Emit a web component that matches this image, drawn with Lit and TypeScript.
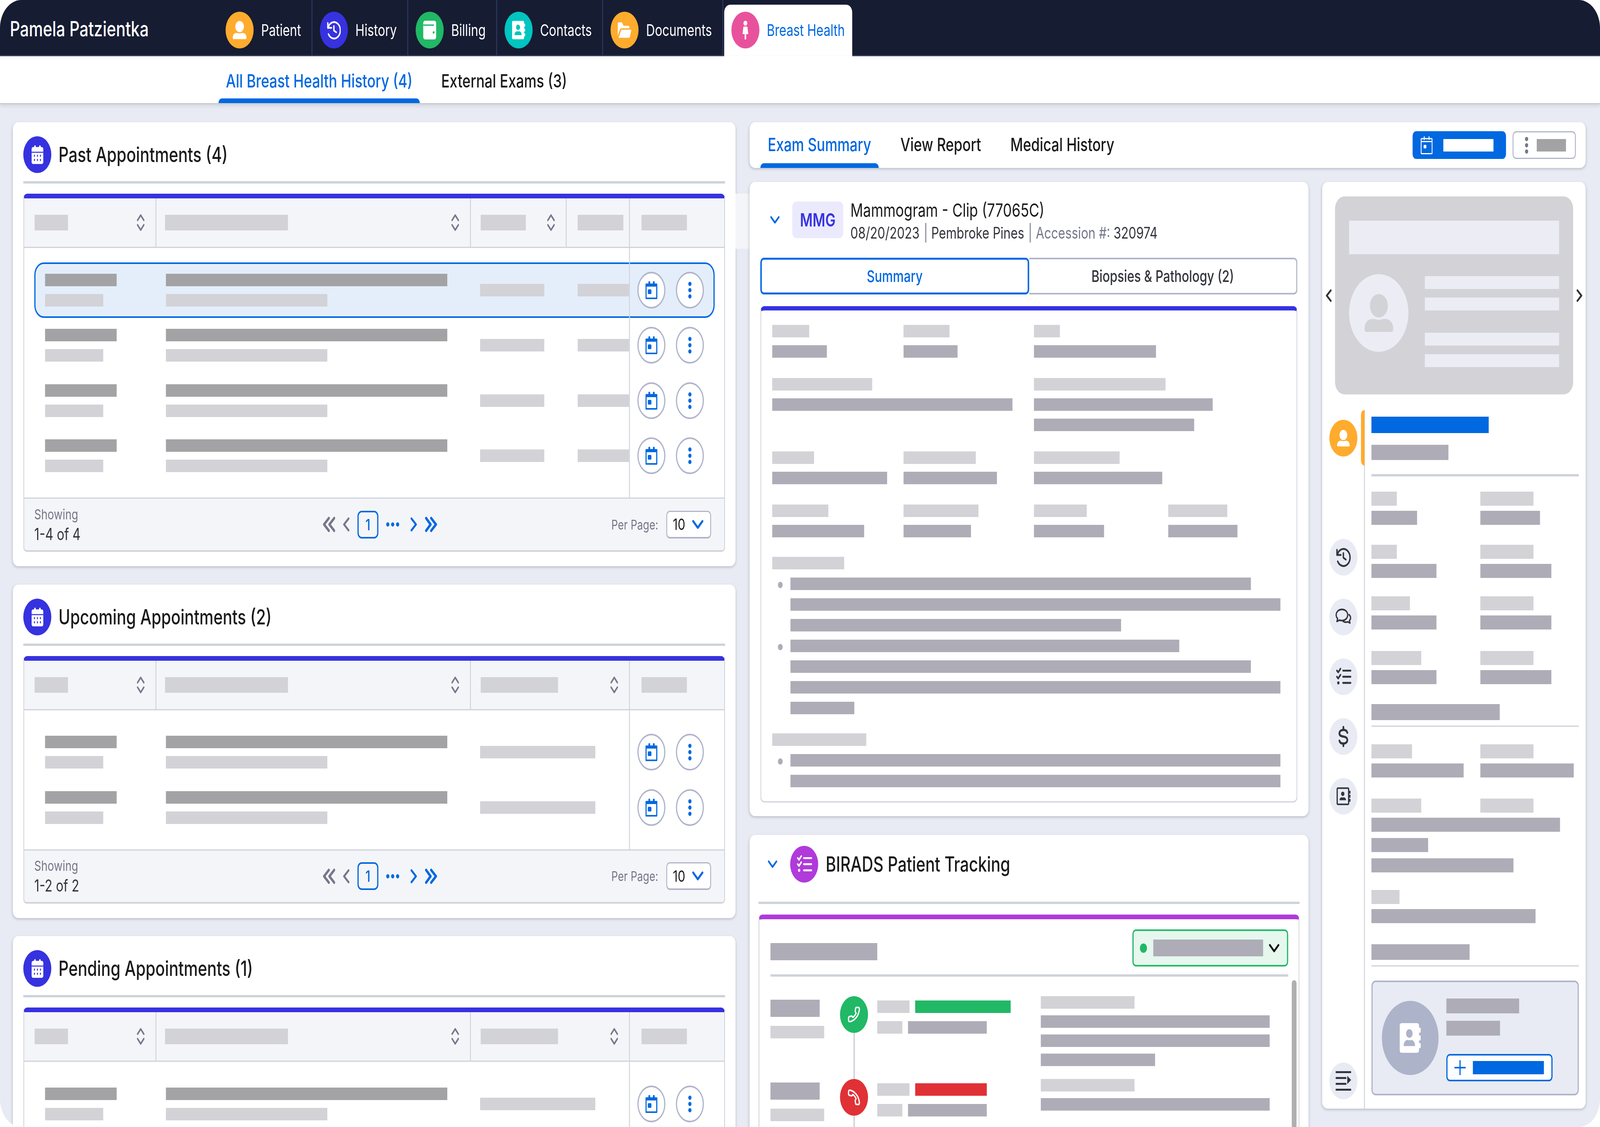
import { LitElement, html, css } from 'lit';
import { customElement } from 'lit/decorators.js';

const bar = (w: number, kind = 'light') => html`<i class="bar ${kind}" style="width:${w}px"></i>`;

const person = html`<svg viewBox="0 0 96 97" fill="currentColor"><circle cx="48" cy="30" r="30"/><path d="M0 91v-4a24 24 0 0 1 24-23h6c6 0 12 2 18 2s12-2 18-2h6a24 24 0 0 1 24 23v4a6 6 0 0 1-6 6H6a6 6 0 0 1-6-6z"/></svg>`;
const history = html`<svg viewBox="2 1.500 20 21" fill="none" stroke="currentColor" stroke-width="2" stroke-linecap="round" stroke-linejoin="round"><path d="M3 4v5.5h5.5"/><path d="M3.4 9.5A9.2 9.2 0 1 1 4 16.5"/><path d="M12 7.500v5l3.500 2"/></svg>`;
const wallet = html`<svg viewBox="2.500 2 19 20"><rect x="3" y="2" width="18" height="20" rx="2.5" fill="#fff"/><rect x="3" y="6" width="15" height="1.4" fill="#21b866"/><circle cx="17.5" cy="14.5" r="1.3" fill="#21b866"/></svg>`;
const contactsSolid = (c: string) => html`<svg viewBox="2.500 2 19.500 20"><rect x="3" y="2" width="17" height="20" rx="1.5" fill="#fff"/><rect x="19" y="5" width="2.5" height="3.5" rx=".8" fill="#fff"/><rect x="19" y="10.2" width="2.5" height="3.5" rx=".8" fill="#fff"/><rect x="19" y="15.4" width="2.5" height="3.5" rx=".8" fill="#fff"/><circle cx="11.5" cy="9" r="2.9" fill="${c}"/><path d="M6.5 17.5v-.8a3.6 3.6 0 0 1 3.4-3.4c1 .3 2.2.3 3.2 0a3.6 3.6 0 0 1 3.4 3.4v.8z" fill="${c}"/></svg>`;
const folder = html`<svg viewBox="2 3 21 18" fill="#fff"><path d="M2 5a2 2 0 0 1 2-2h4.5l2.5 4h7a2 2 0 0 1 2 2v1H8a3 3 0 0 0-3 2.3L2 19z"/><path d="M7.6 11.5H23l-2.4 8.6a1.6 1.6 0 0 1-1.5.9H3.4z"/></svg>`;
const woman = html`<svg viewBox="6 1 12 22.500" fill="#fff"><circle cx="12" cy="4" r="3"/><path d="M9.8 8h4.4c.6 0 1 .4 1.1 1l1.2 8H13.2v6.5h-2.4V17H7.5l1.2-8c.1-.6.5-1 1.100-1z"/></svg>`;
const calSolid = html`<svg viewBox="3 .500 18 23"><rect x="7" y="1" width="2.4" height="5" rx="1.2" fill="#fff"/><rect x="14.6" y="1" width="2.4" height="5" rx="1.2" fill="#fff"/><rect x="3" y="3" width="18" height="20" rx="2.4" fill="#fff"/><rect x="3" y="8.6" width="18" height="1.2" fill="#3632e0"/><g fill="#3632e0"><rect x="6.6" y="12" width="1.6" height="2.6" rx=".8"/><rect x="11.2" y="12" width="1.6" height="2.6" rx=".8"/><rect x="15.8" y="12" width="1.6" height="2.6" rx=".8"/><rect x="6.6" y="17" width="1.6" height="2.6" rx=".8"/><rect x="11.2" y="17" width="1.6" height="2.6" rx=".8"/><rect x="15.8" y="17" width="1.6" height="2.6" rx=".8"/></g></svg>`;
const calOutline = html`<svg viewBox="0 0 40 46" fill="currentColor"><rect x="10" y="0" width="6" height="10" rx="3"/><rect x="25" y="0" width="6" height="10" rx="3"/><path fill-rule="evenodd" d="M2 6h36a2 2 0 0 1 2 2v36a2 2 0 0 1-2 2H2a2 2 0 0 1-2-2V8a2 2 0 0 1 2-2zM4 14v28h32V14z"/><rect x="8" y="21" width="12" height="12" rx="2.5"/></svg>`;
const calThin = html`<svg viewBox="0 0 40 46" fill="none" stroke="currentColor" stroke-width="3"><path d="M12 1v7M28 1v7" stroke-linecap="round"/><rect x="1.5" y="6" width="37" height="38.5" rx="2"/><path d="M3 13.5h34"/><rect x="10" y="22" width="9" height="9" rx="1.5" fill="currentColor" stroke="none"/></svg>`;
const kebab = html`<svg viewBox="0 0 12 44" fill="currentColor"><circle cx="6" cy="6" r="5.4"/><circle cx="6" cy="22" r="5.4"/><circle cx="6" cy="38" r="5.4"/></svg>`;
const sort = html`<svg viewBox="0 0 29 46" fill="none" stroke="currentColor" stroke-width="4.500" stroke-linecap="round" stroke-linejoin="round"><path d="M4 17 14.500 4 25 17M4 29l10.500 13L25 29"/></svg>`;
const dblLeft = html`<svg viewBox="0 0 41 40" fill="none" stroke="currentColor" stroke-width="7" stroke-linecap="round" stroke-linejoin="round"><path d="M20 4 4 20l16 16M38 4 22 20l16 16"/></svg>`;
const dblRight = html`<svg viewBox="0 0 41 40" fill="none" stroke="currentColor" stroke-width="7" stroke-linecap="round" stroke-linejoin="round"><path d="M4 4l15 16L4 36M21 4l16 16-16 16"/></svg>`;
const left = html`<svg viewBox="0 0 23 38" fill="none" stroke="currentColor" stroke-width="6" stroke-linecap="round" stroke-linejoin="round"><path d="M19 4 4 19l15 15"/></svg>`;
const right = html`<svg viewBox="0 0 23 38" fill="none" stroke="currentColor" stroke-width="6" stroke-linecap="round" stroke-linejoin="round"><path d="M4 4l15 15L4 34"/></svg>`;
const dots = html`<svg viewBox="0 0 44 12" fill="currentColor"><circle cx="5.500" cy="6" r="5.400"/><circle cx="22" cy="6" r="5.400"/><circle cx="38.500" cy="6" r="5.400"/></svg>`;
const chevDown = html`<svg viewBox="0 0 34 20" fill="none" stroke="currentColor" stroke-width="5" stroke-linecap="round" stroke-linejoin="round"><path d="M4 3l13 14L30 3"/></svg>`;
const checklist = html`<svg viewBox="0 0 24 24" fill="none" stroke="currentColor" stroke-width="2" stroke-linecap="round" stroke-linejoin="round"><path d="M3 5.500l1.800 1.800L8 3.500M11.500 5.500H22M3 12l1.800 1.800L8 10M11.500 12H22M11.500 18.500H22"/><circle cx="5" cy="18.500" r="1.600" fill="currentColor" stroke="none"/></svg>`;
const chat = html`<svg viewBox="0 0 24 24" fill="none" stroke="currentColor" stroke-width="1.700" stroke-linecap="round" stroke-linejoin="round"><path d="M10 4C5.600 4 2 6.500 2 9.800c0 1.500.8 2.900 2.100 3.900L3 16.700l3.700-1.400c1 .3 2.100.5 3.300.5 4.400 0 8-2.600 8-6S14.400 4 10 4z"/><path d="M19.800 9.500c1.300.8 2.200 2 2.200 3.400 0 1.200-.6 2.200-1.700 3l.9 2.500-3-1.200c-.8.200-1.600.3-2.500.3-2 0-3.700-.6-4.800-1.600"/></svg>`;
const dollar = html`<svg viewBox="0 0 24 24" fill="none" stroke="currentColor" stroke-width="2.400" stroke-linecap="round" stroke-linejoin="round"><path d="M17.500 8c-.6-2-2.800-3-5.500-3-3.200 0-5.500 1.500-5.500 3.700 0 2.400 2.400 3 5.500 3.400s5.500 1.200 5.500 3.500-2.300 3.900-5.500 3.900c-2.700 0-4.900-1-5.500-3"/><path d="M12 2v3M12 19.500V22"/></svg>`;
const contactsLine = html`<svg viewBox="-2 -2 28 28" fill="none" stroke="currentColor" stroke-width="2"><rect x="2" y="2" width="18.500" height="20" rx="1.200"/><path d="M22.500 6v2M22.500 11v2M22.500 16v2" stroke-linecap="round"/><circle cx="11" cy="9" r="2.700" fill="currentColor" stroke="none"/><path d="M5.800 17v-.6a3.400 3.400 0 0 1 3.400-3.100c1.200.3 2.400.3 3.600 0a3.400 3.400 0 0 1 3.400 3.100v.6z" fill="currentColor" stroke="none"/></svg>`;
const collapse = html`<svg viewBox="0 0 52 50" fill="currentColor"><rect width="52" height="5" rx="1"/><rect y="15" width="36" height="5" rx="1"/><rect y="30" width="36" height="5" rx="1"/><rect y="45" width="52" height="5" rx="1"/><path d="M39 12l13 10.500L39 33z"/></svg>`;
const phonePath = 'M22 16.920v3a2 2 0 0 1-2.180 2 19.790 19.790 0 0 1-8.630-3.070 19.500 19.500 0 0 1-6-6 19.790 19.790 0 0 1-3.070-8.670A2 2 0 0 1 4.110 2h3a2 2 0 0 1 2 1.720c.127.960.361 1.903.7 2.810a2 2 0 0 1-.45 2.110L8.090 9.910a16 16 0 0 0 6 6l1.270-1.270a2 2 0 0 1 2.110-.45c.907.339 1.850.573 2.810.7A2 2 0 0 1 22 16.920z';
const phoneIn = html`<svg viewBox="0 0 24 24" fill="none" stroke="#fff" stroke-width="2.200" stroke-linejoin="round"><path transform="matrix(-1 0 0 1 24 0)" d="${phonePath}"/></svg>`;
const phoneOut = html`<svg viewBox="0 0 24 24" fill="none" stroke="#fff" stroke-width="2.200" stroke-linejoin="round"><path transform="rotate(180 12 12)" d="${phonePath}"/></svg>`;
const plus = html`<svg viewBox="0 0 38 38" fill="none" stroke="currentColor" stroke-width="4"><path d="M0 19h38M19 0v38"/></svg>`;

const navTabs = [
  { label: 'Patient', color: '#ffab2e', icon: person },
  { label: 'History', color: '#3632e0', icon: history },
  { label: 'Billing', color: '#21b866', icon: wallet },
  { label: 'Contacts', color: '#00c5c0', icon: contactsSolid('#00c5c0') },
  { label: 'Documents', color: '#ffab2e', icon: folder },
  { label: 'Breast Health', color: '#e8529c', icon: woman, active: true },
];

const examRows = [
  [{ l: 124, d: [183] }, { l: 154, d: [181] }, { l: 87, d: [409] }],
  [{ l: 335, d: [805] }, null, { l: 441, d: [599, 537] }],
  [{ l: 140, d: [385] }, { l: 242, d: [313] }, { l: 287, d: [430] }],
  [{ l: 188, d: [308] }, { l: 251, d: [226] }, { l: 177, d: [235] }, { l: 198, d: [232] }],
];

const examNotes = [
  { label: 241, items: [[1543, 1642, 1108], [1303, 1543, 1642, 214]] },
  { label: 315, items: [[1642, 1642]] },
];

// side panel rows: top margin, then two label/value stacks
const sideTop = [
  { mt: 39, a: [85, [153]], b: [178, [200]] },
  { mt: 51, a: [85, [218]], b: [178, [238]] },
  { mt: 47, a: [129, [218]], b: [178, [238]] },
  { mt: 55, a: [167, [218]], b: [178, [238]] },
];
const sideBottom = [
  { mt: 45, a: [136, [309]], b: [178, [313]] },
  { mt: 54, a: [167, [632, 190, 476]], b: [178, []] },
  { mt: 45, a: [94, [550]], b: null },
];

const tracking = [
  { color: '#21b866', tint: 'ok', icon: phoneIn, status: 320, lines: [767, 767, 383] },
  { color: '#e03137', tint: 'bad', icon: phoneOut, status: 240, lines: [767] },
];

@customElement('app-root')
export class AppRoot extends LitElement {
  static styles = css`
    :host {
      display: block;
      width: 100vw;
      height: 100vh;
      overflow: hidden;
      font-family: Inter, 'Liberation Sans', sans-serif;
      color: #1a1a1a;
    }
    * { box-sizing: border-box; }
    svg { display: block; }
    .frame {
      width: 5362px;
      height: 2886px;
      overflow: hidden;
      border-radius: 72px;
      background: #e8ebf3;
      display: flex;
      flex-direction: column;
      transform-origin: 0 0;
    }
    .bar { display: block; height: 32px; flex: none; }
    .light { background: #d2d2d7; }
    .dark { background: #a3a3a5; }
    .mid { background: #aeadb7; }

    /* top bar */
    .topbar {
      flex: none;
      height: 144px;
      background: #161c32;
      border-bottom: 3px solid #3a4160;
      display: flex;
      align-items: stretch;
      color: #fff;
    }
    .name {
      width: 731px;
      padding: 44px 0 0 33px;
      font-size: 53px;
      line-height: 60px;
      font-weight: 500;
    }
    .nav-tab {
      display: flex;
      align-items: center;
      gap: 25px;
      padding: 13px 35px 0 25px;
      border-right: 3px solid #2f3a63;
      font-size: 41px;
      font-weight: 400;
    }
    .nav-tab.active {
      align-self: flex-end;
      height: 132px;
      margin-bottom: -3px;
      margin-left: 3px;
      padding: 0 25px 2px 24px;
      background: #fff;
      border: none;
      border-radius: 20px 20px 0 0;
      color: #0068e0;
    }
    .dot {
      flex: none;
      width: 94px;
      height: 94px;
      border-radius: 50%;
      display: grid;
      place-items: center;
      color: #fff;
    }
    .dot svg { width: 46px; height: 48px; }

    /* sub tabs */
    .subnav {
      flex: none;
      height: 123px;
      background: #fff;
      border-bottom: 3px solid #c9ccd2;
      box-shadow: 0 4px 10px rgba(60, 70, 100, 0.14);
      padding-left: 732px;
      display: flex;
      gap: 46px;
      position: relative;
    }
    .tab {
      padding: 4px 25px 0;
      font-size: 47px;
      font-weight: 500;
      display: flex;
      align-items: center;
      position: relative;
      white-space: nowrap;
    }
    .tab.on { color: #0068e0; }
    .tab.on::after {
      content: '';
      position: absolute;
      left: 0;
      right: 0;
      bottom: 0;
      height: 12px;
      background: #0068e0;
      border-radius: 12px 12px 0 0;
    }

    .main {
      flex: 1;
      min-height: 0;
      padding: 46px 48px 0 43px;
      display: grid;
      grid-template-columns: 2422px 2802px;
      gap: 47px;
      overflow: hidden;
    }
    .col { display: flex; flex-direction: column; min-width: 0; }
    .left { gap: 46.5px; }

    .card {
      flex: none;
      background: #fff;
      border-radius: 18px;
      box-shadow: 0 3px 7px rgba(60, 70, 100, 0.28);
      position: relative;
    }
    .appts { padding: 0 35px 37px; }
    .card-head {
      height: 157px;
      padding-top: 36px;
      border-bottom: 6px solid #ced3da;
      display: flex;
      align-items: flex-start;
      gap: 24px;
    }
    .card-head .title {
      font-size: 53px;
      line-height: 94px;
      font-weight: 500;
    }
    .indigo { background: #3632e0; }
    .indigo svg { width: 41px; height: 50px; }
    .bridge {
      position: absolute;
      left: 100%;
      top: 183px;
      width: 47px;
      height: 141px;
      background: #f4f5f8;
    }

    /* table */
    .table {
      margin-top: 26px;
      border: 3px solid #d0d3db;
      border-top: 12px solid #3632e0;
      border-bottom: 4px solid #cfd3dc;
      border-radius: 14px 14px 12px 12px;
    }
    .thead {
      height: 127px;
      background: #f4f5f8;
      border-bottom: 3px solid #d0d3db;
      display: grid;
      grid-template-columns: 443px 1054px 321px 212px 1fr;
    }
    .thead.three { grid-template-columns: 443px 1054px 533px 1fr; }
    .th {
      display: flex;
      align-items: center;
      justify-content: space-between;
      padding: 0 35px 0 33px;
      border-right: 3px solid #d0d3db;
      color: #75778a;
    }
    .th:nth-child(1) { padding-left: 35px; }
    .th:nth-child(2) { padding-left: 29px; }
    .thead:not(.three) .th:nth-child(4) { padding-left: 37px; }
    .th:last-child { padding-left: 39px; border-right: none; }
    .th .bar { height: 40px; }
    .th svg { width: 29px; height: 46px; }

    .tbody {
      position: relative;
      padding: 37px 32px 36px 34px;
    }
    .tbody::after {
      content: '';
      position: absolute;
      left: 2027px;
      top: 0;
      bottom: 0;
      width: 3px;
      background: #d0d3db;
    }
    .row {
      height: 141.5px;
      padding-left: 32px;
      border: 4px solid transparent;
      border-radius: 32px;
      display: grid;
      grid-template-columns: 405px 1053px 327px 172px 1fr;
      align-items: center;
    }
    .row.three { grid-template-columns: 405px 1053px 499px 1fr; }
    .row.sel { background: #e4eefb; border-color: #0068e0; }
    .stack { display: flex; flex-direction: column; gap: 20px; }
    .actions { display: flex; gap: 35px; padding-left: 28px; position: relative; z-index: 1; }
    .round {
      width: 94px;
      height: 94px;
      border-radius: 50%;
      border: 4px solid #b0b5ca;
      background: #fff;
      color: #0068e0;
      display: grid;
      place-items: center;
    }
    .round .cal { width: 40px; height: 46px; }
    .round .keb { width: 12px; height: 44px; }
    .round svg { width: 100%; height: 100%; }

    .tfoot {
      height: 135px;
      border-top: 3px solid #cfd3dc;
      background: #f4f5f8;
      border-radius: 0 0 10px 10px;
      padding: 0 44px 0 34px;
      display: grid;
      grid-template-columns: 967px auto 1fr;
      align-items: center;
    }
    .showing { font-size: 36px; line-height: 46px; color: #75778a; }
    .range { font-size: 42px; line-height: 50px; color: #33343c; margin-top: 3px; }
    .pager { display: flex; align-items: center; gap: 26px; color: #0068e0; }
    .pager .off { color: #75778a; }
    .pager .dbl { width: 41px; height: 40px; }
    .pager .sgl { width: 23px; height: 38px; }
    .pager .more { width: 44px; height: 12px; margin-right: 11px; }
    .pager svg { width: 100%; height: 100%; }
    .page {
      width: 70px;
      height: 71px;
      border: 4px solid #0068e0;
      border-radius: 14px;
      display: grid;
      place-items: center;
      font-size: 40px;
      font-weight: 500;
    }
    .perpage {
      justify-self: end;
      display: flex;
      align-items: center;
      gap: 27px;
      font-size: 34.5px;
      color: #75778a;
    }
    .select {
      width: 150px;
      height: 71px;
      border: 3px solid #b0b5ca;
      border-bottom-width: 4px;
      border-radius: 12px;
      background: #fff;
      padding: 0 21px 0 19px;
      display: flex;
      align-items: center;
      justify-content: space-between;
      color: #1a1a1a;
      font-size: 40px;
    }
    .select svg { width: 41px; height: 24px; color: #0068e0; }

    /* right side */
    .tabs-card {
      height: 117px;
      padding: 0 33px 0 36px;
      display: flex;
      align-items: stretch;
      gap: 22px;
    }
    .tabs-card .tab { padding: 0 25px 4px; font-size: 46.5px; }
    .tabs-card .tabs { display: flex; gap: 48px; flex: 1; }
    .tool {
      align-self: center;
      height: 71px;
      border-radius: 12px;
      display: flex;
      align-items: center;
    }
    .tool .bar { height: 32px; }
    .tool.pri {
      width: 313px;
      background: #0068e0;
      padding-left: 27px;
      gap: 36px;
      color: #fff;
    }
    .tool.pri svg { width: 40px; height: 46px; }
    .white { background: #fff; }
    .tool.sec {
      width: 212px;
      border: 3px solid #b0b5ca;
      padding-left: 38px;
      gap: 28px;
      color: #75778a;
    }
    .tool.sec svg { width: 12px; height: 44px; }

    .lower {
      margin-top: 36px;
      display: grid;
      grid-template-columns: 1873px 883px;
      gap: 46px;
      align-items: start;
    }
    .exam { height: 1624px; padding: 50px 37px 36px 36px; }
    .exam-head { height: 94px; display: flex; align-items: flex-start; }
    .exam-head .chev {
      width: 34px;
      height: 20px;
      margin: 37px 41px 0 32px;
      color: #0068e0;
    }
    .badge {
      width: 171px;
      height: 94px;
      border-radius: 14px;
      background: #ebeafd;
      color: #3632e0;
      font-size: 46px;
      font-weight: 600;
      display: grid;
      place-items: center;
      margin-right: 24px;
    }
    .exam-title { font-size: 47px; line-height: 44px; font-weight: 400; white-space: nowrap; }
    .exam-sub {
      margin-top: 11px;
      height: 50px;
      display: flex;
      align-items: center;
      font-size: 40.8px;
      color: #33343c;
      white-space: nowrap;
    }
    .exam-sub span { padding-right: 19px; line-height: 50px; }
    .exam-sub span + span { padding-left: 17px; border-left: 3px solid #75778a; }
    .exam-sub em { font-style: normal; color: #75778a; }
    .seg { margin-top: 50px; height: 94px; display: flex; font-size: 41px; font-weight: 500; }
    .seg div {
      display: grid;
      place-items: center;
    }
    .seg .a {
      width: 901px;
      border: 5px solid #0068e0;
      border-radius: 12px;
      color: #0068e0;
    }
    .seg .b {
      flex: 1;
      border: 4px solid #b0b5ca;
      border-left: none;
      border-radius: 0 12px 12px 0;
      color: #33343c;
    }
    .panel {
      margin-top: 30px;
      height: 1271px;
      border: 3px solid #d0d3db;
      border-top: 11px solid #3632e0;
      border-radius: 14px;
      padding: 37px 37px 0;
    }
    .fields {
      display: grid;
      grid-template-columns: 440px 437px 450px 1fr;
      row-gap: 52px;
      margin-bottom: 50px;
    }
    .field { display: flex; flex-direction: column; gap: 20px; }
    .note { display: flex; flex-direction: column; gap: 21px; margin-top: 49px; }
    .fields + .note { margin-top: 0; }
    .item { display: grid; grid-template-columns: 61px 1fr; }
    .bullet {
      width: 16px;
      height: 16px;
      border-radius: 50%;
      background: #aeadb7;
      margin: 11px 0 0 19px;
    }
    .lines { display: flex; flex-direction: column; gap: 21px; }

    .birads {
      margin-top: 48px;
      height: 900px;
      padding: 28px 30px 0;
    }
    .bi-head {
      height: 149px;
      border-bottom: 6px solid #ced3da;
      display: flex;
      align-items: flex-start;
    }
    .bi-head .chev { width: 34px; height: 20px; margin: 37px 42px 0 30px; color: #0068e0; }
    .bi-head .dot { background: #b03adb; }
    .bi-head .dot svg { width: 58px; height: 58px; }
    .bi-head .title { margin-left: 25px; font-size: 53px; line-height: 94px; font-weight: 500; }
    .bi-panel {
      margin-top: 27px;
      position: relative;
      height: 600px;
      border: 3px solid #d0d3db;
      border-top: 12px solid #b03adb;
      border-radius: 14px 14px 0 0;
      padding: 26px 35px 0 37px;
    }
    .bi-top {
      height: 115px;
      display: flex;
      justify-content: space-between;
      align-items: flex-start;
    }
    .bi-top > .bar { height: 44px; width: 358px; margin-top: 35px; }
    .status {
      width: 522px;
      height: 95px;
      border: 4px solid #21b866;
      border-radius: 12px;
      background: #e6f7ee;
      display: flex;
      align-items: center;
      padding-left: 21px;
      color: #111;
    }
    .status b { width: 24px; height: 24px; border-radius: 50%; background: #21b866; margin-right: 21px; }
    .status .bar { height: 43px; }
    .status svg { width: 38px; height: 24px; margin-left: 18px; }
    .bi-rule { height: 6px; background: #ced3da; }
    .scroll {
      position: absolute;
      right: 7px;
      top: 156px;
      bottom: 0;
      width: 16px;
      border-radius: 8px 8px 0 0;
      background: #b0b0b3;
    }
    .timeline { padding-top: 50px; }
    .event {
      height: 212px;
      display: grid;
      grid-template-columns: 233px 125px 548px 1fr;
    }
    .when { padding-top: 9px; display: flex; flex-direction: column; gap: 23px; }
    .when .bar:first-child { height: 44px; }
    .track { display: flex; flex-direction: column; }
    .track .dot svg { width: 44px; height: 44px; }
    .track u { display: block; flex: 1; width: 5px; margin-left: 45px; background: #ced3da; }
    .what { padding-top: 11px; display: flex; flex-direction: column; gap: 21px; }
    .what div { display: flex; gap: 19px; }
    .ok { background: #21b866; }
    .bad { background: #e03137; }
    .said { display: flex; flex-direction: column; gap: 17px; }

    /* side panel */
    .side {
      height: 2373px;
      padding-top: 37px;
      display: flex;
      flex-direction: column;
    }
    .carousel {
      display: grid;
      grid-template-columns: 43px 798px 42px;
      align-items: center;
      justify-items: center;
      color: #333;
    }
    .carousel > svg { width: 22px; height: 34px; }
    .idcard {
      height: 507px;
      width: 798px;
      border-radius: 32px;
      background: #d2d2d7;
      padding: 62px 47px 0;
    }
    .idcard .top { height: 86px; background: #ebecf4; }
    .idbody { margin-top: 51px; display: grid; grid-template-columns: 199px 1fr; gap: 55px; }
    .face {
      width: 199px;
      height: 199px;
      border-radius: 50%;
      background: #ebecf4;
      display: grid;
      place-items: center;
      color: #d2d2d7;
    }
    .face svg { width: 96px; height: 97px; }
    .idlines { padding-top: 5px; display: flex; flex-direction: column; gap: 22px; }
    .idlines i { display: block; height: 33px; background: #ebecf4; }
    .idlines i:nth-child(3) { margin-top: 35px; }

    .side-body { flex: 1; margin-top: 40px; display: flex; min-height: 0; }
    .rail {
      width: 143px;
      flex: none;
      border-right: 3px solid #ced3da;
      padding: 25px 0 24px 24px;
      display: flex;
      flex-direction: column;
      position: relative;
    }
    .rail .accent {
      position: absolute;
      right: -2px;
      top: 0;
      width: 12px;
      height: 142px;
      background: #ffab2e;
      border-radius: 12px 0 0 12px;
    }
    .rail .me { background: #ffab2e; margin-bottom: 211px; }
    .rail .me svg { width: 42px; height: 46px; }
    .rail .tools { display: flex; flex-direction: column; gap: 59px; }
    .rail .tool-btn { background: #e8ebf3; color: #33343c; }
    .rail .tool-btn svg { width: 58px; height: 58px; }
    .rail .tool-btn:first-child svg { width: 50px; height: 50px; }
    .rail .bottom { margin-top: auto; }
    .rail .bottom svg { width: 52px; height: 50px; }
    .info { flex: 1; padding: 17px 23px 0 22px; min-width: 0; }
    .info .b1 { height: 42px; background: #0068e0; width: 393px; }
    .info .b2 { height: 39px; width: 258px; margin-top: 30px; }
    .rule { background: #ced3da; }
    .rule.big { height: 6px; margin-top: 36px; }
    .rule.thin { height: 3px; margin-top: 14px; }
    .kv { display: grid; grid-template-columns: 365px 1fr; }
    .kv > div { display: flex; flex-direction: column; gap: 13px; }
    .kv .bar { height: 36px; }
    .kv .lines2 { display: flex; flex-direction: column; gap: 16px; }
    .wide1 { height: 41px; margin-top: 51px; }
    .wide2 { height: 40px; margin-top: 54px; }

    .contact {
      margin-top: 36px;
      height: 294px;
      border: 4px solid #b0b5ca;
      border-radius: 14px;
      background: #e8ebf3;
      padding: 0 31px;
      display: flex;
      align-items: center;
      gap: 26px;
    }
    .contact .big {
      width: 190px;
      height: 190px;
      background: #adb3c9;
    }
    .contact .big svg { width: 74px; height: 82px; }
    .contact-info { padding-top: 10px; }
    .contact-info .bar { height: 38px; }
    .contact-info .bar + .bar { margin-top: 19px; margin-bottom: 47px; }
    .add {
      width: 356px;
      height: 70px;
      border: 4px solid #0068e0;
      border-radius: 12px;
      background: #fff;
      display: flex;
      align-items: center;
      padding-left: 23px;
      gap: 24px;
      color: #0068e0;
    }
    .add svg { width: 38px; height: 38px; }
    .add .bar { height: 34px; margin: 0; background: #0068e0; }
  `;

  // The headless window can come up narrower than the 5362x2886 design (4096 wide here).
  // Fit the whole design into whatever window we get so nothing is cut off; this is 1:1 at full size.
  private fit = `transform:scale(${window.innerWidth / 5362},${window.innerHeight / 2886})`;

  private renderAppts(title: string, rows: number, range: string, three: boolean, bridge = false) {
    const heads = three ? [112, 412, 259] : [112, 412, 151, 153];
    return html`
      <section class="card appts">
        ${bridge ? html`<div class="bridge"></div>` : ''}
        <div class="card-head">
          <div class="dot indigo">${calSolid}</div>
          <div class="title">${title}</div>
        </div>
        <div class="table">
          <div class="thead ${three ? 'three' : ''}">
            ${heads.map((w, i) => html`
              <div class="th">${bar(w)}${three || i < 3 ? sort : ''}</div>`)}
            <div class="th">${bar(152)}</div>
          </div>
          <div class="tbody">
            ${Array.from({ length: rows }, (_, i) => html`
              <div class="row ${three ? 'three' : ''} ${bridge && i === 0 ? 'sel' : ''}">
                <div class="stack">${bar(240, 'dark')}${bar(195)}</div>
                <div class="stack">${bar(943, 'dark')}${bar(541)}</div>
                ${three ? bar(386) : html`${bar(215)}${bar(172)}`}
                <div class="actions">
                  <div class="round"><div class="cal">${calOutline}</div></div>
                  <div class="round"><div class="keb">${kebab}</div></div>
                </div>
              </div>`)}
          </div>
          ${range ? html`
          <div class="tfoot">
            <div>
              <div class="showing">Showing</div>
              <div class="range">${range}</div>
            </div>
            <div class="pager">
              <div class="dbl off">${dblLeft}</div>
              <div class="sgl off">${left}</div>
              <div class="page">1</div>
              <div class="more">${dots}</div>
              <div class="sgl">${right}</div>
              <div class="dbl">${dblRight}</div>
            </div>
            <div class="perpage">
              Per Page:
              <div class="select">10 ${chevDown}</div>
            </div>
          </div>` : ''}
        </div>
      </section>
    `;
  }

  private renderExam() {
    return html`
      <section class="card exam">
        <div class="exam-head">
          <div class="chev">${chevDown}</div>
          <div class="badge">MMG</div>
          <div>
            <div class="exam-title">Mammogram - Clip (77065C)</div>
            <div class="exam-sub">
              <span>08/20/2023</span>
              <span>Pembroke Pines</span>
              <span><em>Accession #:</em> 320974</span>
            </div>
          </div>
        </div>
        <div class="seg">
          <div class="a">Summary</div>
          <div class="b">Biopsies &amp; Pathology (2)</div>
        </div>
        <div class="panel">
          <div class="fields">
            ${examRows.map((row) => html`
              ${row.map((f) => html`
                <div class="field">
                  ${f ? html`${bar(f.l)}${f.d.map((w) => bar(w, 'mid'))}` : ''}
                </div>`)}
              ${row.length < 4 ? html`<div></div>` : ''}
            `)}
          </div>
          ${examNotes.map((n) => html`
            <div class="note">
              ${bar(n.label)}
              ${n.items.map((lines) => html`
                <div class="item">
                  <div class="bullet"></div>
                  <div class="lines">${lines.map((w) => bar(w, 'mid'))}</div>
                </div>`)}
            </div>`)}
        </div>
      </section>
    `;
  }

  private renderBirads() {
    return html`
      <section class="card birads">
        <div class="bi-head">
          <div class="chev">${chevDown}</div>
          <div class="dot">${checklist}</div>
          <div class="title">BIRADS Patient Tracking</div>
        </div>
        <div class="bi-panel">
          <div class="bi-top">
            <i class="bar mid"></i>
            <div class="status"><b></b>${bar(368, 'mid')}${chevDown}</div>
          </div>
          <div class="bi-rule"></div>
          <div class="scroll"></div>
          <div class="timeline">
            ${tracking.map((e) => html`
              <div class="event">
                <div class="when">${bar(165, 'mid')}${bar(180)}</div>
                <div class="track">
                  <div class="dot" style="background:${e.color}">${e.icon}</div>
                  <u></u>
                </div>
                <div class="what">
                  <div>${bar(108)}${bar(e.status, e.tint)}</div>
                  <div>${bar(84)}${bar(264, 'mid')}</div>
                </div>
                <div class="said">
                  ${bar(314)}
                  ${e.lines.map((w) => bar(w, 'mid'))}
                </div>
              </div>`)}
          </div>
        </div>
      </section>
    `;
  }

  private renderKv(r: any) {
    const cell = (c: any) => c ? html`
      <div>
        ${bar(c[0])}
        <div class="lines2">${c[1].map((w: number) => bar(w, 'mid'))}</div>
      </div>` : html`<div></div>`;
    return html`<div class="kv" style="margin-top:${r.mt}px">${cell(r.a)}${cell(r.b)}</div>`;
  }

  private renderSide() {
    return html`
      <aside class="card side">
        <div class="carousel">
          ${left}
          <div class="idcard">
            <div class="top"></div>
            <div class="idbody">
              <div class="face">${person}</div>
              <div class="idlines"><i></i><i></i><i></i><i></i></div>
            </div>
          </div>
          ${right}
        </div>
        <div class="side-body">
          <div class="rail">
            <div class="accent"></div>
            <div class="dot me">${person}</div>
            <div class="tools">
              ${[history, chat, checklist, dollar, contactsLine].map((ic) => html`<div class="dot tool-btn">${ic}</div>`)}
            </div>
            <div class="dot tool-btn bottom">${collapse}</div>
          </div>
          <div class="info">
            <div class="b1"></div>
            <div class="b2 mid"></div>
            <div class="rule big"></div>
            ${sideTop.map((r) => this.renderKv(r))}
            ${bar(430, 'mid wide1')}
            <div class="rule thin"></div>
            ${sideBottom.map((r) => this.renderKv(r))}
            ${bar(329, 'mid wide2')}
            <div class="rule thin"></div>
            <div class="contact">
              <div class="dot big">${contactsSolid('#adb3c9')}</div>
              <div class="contact-info">
                ${bar(244, 'mid')}${bar(180, 'mid')}
                <div class="add">${plus}${bar(238)}</div>
              </div>
            </div>
          </div>
        </div>
      </aside>
    `;
  }

  render() {
    return html`
      <div class="frame" style="${this.fit}">
        <header class="topbar">
          <div class="name">Pamela Patzientka</div>
          ${navTabs.map((t) => html`
            <div class="nav-tab ${t.active ? 'active' : ''}">
              <div class="dot" style="background:${t.color}">${t.icon}</div>
              ${t.label}
            </div>`)}
        </header>
        <nav class="subnav">
          <div class="tab on">All Breast Health History (4)</div>
          <div class="tab">External Exams (3)</div>
        </nav>
        <main class="main">
          <div class="col left">
            ${this.renderAppts('Past Appointments (4)', 4, '1-4 of 4', false, true)}
            ${this.renderAppts('Upcoming Appointments (2)', 2, '1-2 of 2', true)}
            ${this.renderAppts('Pending Appointments (1)', 1, '', true)}
          </div>
          <div class="col">
            <section class="card tabs-card">
              <div class="tabs">
                <div class="tab on">Exam Summary</div>
                <div class="tab">View Report</div>
                <div class="tab">Medical History</div>
              </div>
              <div class="tool pri">${calThin}${bar(168, 'white')}</div>
              <div class="tool sec">${kebab}${bar(98, 'dark')}</div>
            </section>
            <div class="lower">
              <div class="col">
                ${this.renderExam()}
                ${this.renderBirads()}
              </div>
              ${this.renderSide()}
            </div>
          </div>
        </main>
      </div>
    `;
  }
}
